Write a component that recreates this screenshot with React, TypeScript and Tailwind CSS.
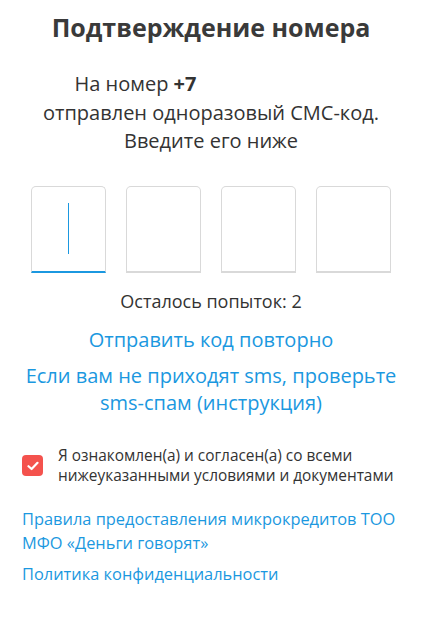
export default function App() {
  const boxes = [0, 1, 2, 3];
  return (
    <div
      className="min-h-[620px] w-full bg-white text-[#333333]"
      style={{ fontFamily: '"Open Sans", "Liberation Sans", sans-serif' }}
    >
      <div className="px-[22px] pt-[10px]">
        <h1 className="text-center text-[25px] font-bold leading-[34px] text-[#3a3a3a]">
          Подтверждение номера
        </h1>

        <p className="mt-[26px] text-center text-[20px] leading-[28.5px] text-[#333333]">
          На номер <b className="font-bold">+7</b>
          <span className="inline-block w-[151px]">&nbsp;</span>
          <br />
          отправлен одноразовый СМС-код.
          <br />
          Введите его ниже
        </p>

        <div className="mt-[30px] flex justify-center gap-[20px]">
          {boxes.map((i) => (
            <div
              key={i}
              className={
                i === 0
                  ? 'flex h-[87px] w-[75px] items-center justify-center rounded-t-[5px] border border-b-2 border-[#d9d9d9] border-b-[#1b98e0]'
                  : 'flex h-[87px] w-[75px] items-center justify-center rounded-t-[5px] border border-b-2 border-[#d9d9d9]'
              }
            >
              {i === 0 && <div className="h-[51px] w-[1.5px] bg-[#1b98e0]" />}
            </div>
          ))}
        </div>

        <p className="mt-[16px] text-center text-[18px] leading-[24px] text-[#333333]">
          Осталось попыток: 2
        </p>

        <p className="mt-[13px] text-center text-[20px] leading-[27px] text-[#1b98e0]">
          Отправить код повторно
        </p>

        <p className="mt-[9px] text-center text-[20px] leading-[27px] text-[#1b98e0]">
          Если вам не приходят sms, проверьте
          <br />
          sms-спам (инструкция)
        </p>

        <div className="mt-[30px] flex items-center gap-[15px]">
          <div className="flex h-[21px] w-[21px] shrink-0 items-center justify-center rounded-[4px] bg-[#f4524d]">
            <svg width="12" height="10" viewBox="0 0 12 10" fill="none">
              <path d="M1.5 5.2 L4.6 8 L10.5 1.8" stroke="white" strokeWidth="2.2" strokeLinecap="round" strokeLinejoin="round" />
            </svg>
          </div>
          <p className="text-[15.4px] leading-[20px] text-[#333333]">
            Я ознакомлен(а) и согласен(а) со всеми
            <br />
            нижеуказанными условиями и документами
          </p>
        </div>

        <div className="mt-[21px] text-[16.4px] leading-[24.3px] text-[#1b98e0]">
          <p>
            Правила предоставления микрокредитов ТОО
            <br />
            МФО «Деньги говорят»
          </p>
          <p className="mt-[7px]">Политика конфиденциальности</p>
        </div>
      </div>
    </div>
  );
}
